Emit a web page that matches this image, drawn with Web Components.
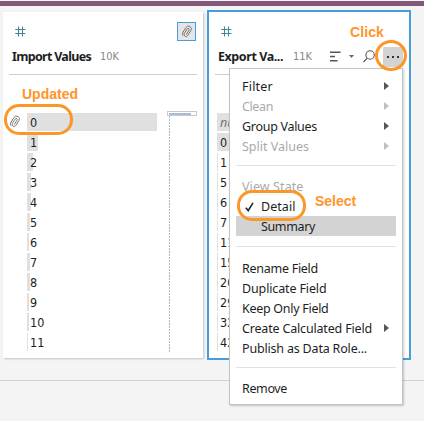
<!DOCTYPE html>
<html lang="en"><head><meta charset="utf-8"><title>Field profile</title>
<style>
html,body{margin:0;background:#f4f4f4}
body{width:424px;height:421px;overflow:hidden;font:12.5px/20px "Noto Sans","Open Sans",sans-serif;color:#1e1e1e}
</style></head><body><profile-app></profile-app>
<script>
const define=(name,html,setup)=>customElements.define(name,class extends HTMLElement{
 connectedCallback(){
  if(this.shadowRoot)return;
  this.attachShadow({mode:'open'}).innerHTML=html;
  if(setup)setup.call(this,this.shadowRoot);
 }
});
/* Text tracked to an advance width given in pixels */
define('fit-text','<style>:host{display:inline-block;white-space:nowrap;flex:none}</style><span><slot></slot></span>',function(r){
 const s=r.querySelector('span'),w=+this.getAttribute('w'),n=this.textContent.length;
 const d=(w-s.getBoundingClientRect().width)/n;
 s.style.letterSpacing=d.toFixed(3)+'px';
});
define('hash-icon','<style>:host{display:block;width:11px;height:11px}svg{display:block}</style><svg width="11" height="11" fill="none" stroke="#3f8799" stroke-width="1.1"><path d="M3.5 .5v10M7.5 .5v10M.2 3.5h10.2M.2 7.5h10.2"/></svg>');
define('clip-icon','<style>:host{display:block;width:12px;height:13px}svg{display:block}</style><svg width="12" height="13" viewBox="0 0 12 13" fill="none" stroke="#707070" stroke-width=".85" stroke-linecap="round"><g transform="rotate(32 6 6.5)"><path d="M3 8.8V3.6a2.9 2.9 0 0 1 5.8 0v6a2 2 0 0 1-4 0V4.2a1.1 1.1 0 0 1 2.2 0v5"/><path d="M3 8.2v1.3a3 3 0 0 0 1.2 2.4"/></g></svg>');
define('value-row',`<style>:host{display:grid;height:20px;grid-template-columns:24px 1fr;align-items:start;font-family:"DejaVu Sans Condensed","DejaVu Sans",sans-serif;font-stretch:condensed;font-size:12.5px}
.i{padding:2px 0 0 6px}.b{display:flex;box-sizing:border-box;height:18px;align-items:center;background:linear-gradient(#e0e0e0,#e0e0e0) no-repeat 0 0/var(--bar) 100%;padding:2px 0 0 3px}</style><div class="i"><slot name="icon"></slot></div><div class="b"><slot></slot></div>`);
define('menu-item',`<style>:host{display:flex;height:20px;align-items:center;justify-content:space-between;padding:0 7px 0 6px}
:host([disabled]){color:#aaa}:host([active]){background:#d3d3d3}
:host([indent]){padding-left:25px}:host([checked]){padding-left:9px}
.l{display:flex;align-items:center;gap:7px;padding-top:2px}svg{display:none}:host([sub]) .s,:host([checked]) .c{display:block}</style>
<span class="l"><svg class="c" width="9" height="10" fill="none" stroke="#222" stroke-width="1.6"><path d="M.8 5.8l2.4 2.8L8 .9"/></svg><slot></slot></span><svg class="s" width="5" height="8"><path d="M0 0l5 4-5 4z" fill="currentColor" opacity=".75"/></svg>`);
define('menu-rule','<style>:host{display:block;height:1px;background:#e1e1e1}</style>');
define('field-menu',`<style>:host{position:absolute;left:229px;top:68px;width:174px;height:337px;box-sizing:border-box;background:#fff;border:1px solid #c3c3c3;box-shadow:1px 1px 2px #0003;padding:7px 6px;z-index:2}
menu-rule.a{margin:9px 0 10px}menu-rule.b{margin:10px 0 11px}menu-rule.c{margin:9px 0 10px}</style>
<menu-item sub><fit-text w="31">Filter</fit-text></menu-item>
<menu-item sub disabled><fit-text w="31">Clean</fit-text></menu-item>
<menu-item sub><fit-text w="75">Group Values</fit-text></menu-item>
<menu-item sub disabled><fit-text w="67">Split Values</fit-text></menu-item>
<menu-rule class="a"></menu-rule>
<menu-item disabled><fit-text w="61.5">View State</fit-text></menu-item>
<menu-item checked><fit-text w="34.5">Detail</fit-text></menu-item>
<menu-item active indent><fit-text w="54">Summary</fit-text></menu-item>
<menu-rule class="b"></menu-rule>
<menu-item><fit-text w="76">Rename Field</fit-text></menu-item>
<menu-item><fit-text w="84.5">Duplicate Field</fit-text></menu-item>
<menu-item><fit-text w="86.5">Keep Only Field</fit-text></menu-item>
<menu-item sub><fit-text w="130">Create Calculated Field</fit-text></menu-item>
<menu-item><fit-text w="125">Publish as Data Role...</fit-text></menu-item>
<menu-rule class="c"></menu-rule>
<menu-item><fit-text w="45">Remove</fit-text></menu-item>`);
define('field-card',`<style>:host{display:block;box-sizing:border-box;width:200px;height:346px;background:#fff;box-shadow:1px 1px 2px #0003}
:host([selected]){width:204px;height:350px;border:2px solid #449fdb;box-shadow:none}
.top{display:flex;justify-content:space-between;height:31px;padding:10px 10px 0 12px;box-sizing:border-box}
hash-icon{margin-top:4px}
.head{display:flex;height:32px;align-items:center;padding:0 0 4px 3px;box-sizing:border-box;margin:0 6px 38px;border-bottom:1px solid #cfcfcf}
.body{display:grid;grid-template-columns:154px 1fr}
:host([selected]) .body{margin-left:-16px}
</style><div class="top"><hash-icon></hash-icon><slot name="badge"></slot></div><div class="head"><slot name="head"></slot></div><div class="body"><div><slot></slot></div><slot name="map"></slot></div>`);
define('mini-map',`<style>:host{display:block;margin:-2px 0 0 10px;width:30px}.v{box-sizing:border-box;height:5px;border:1px solid #c9c9c9;padding:1px 0 0 1px}.v div{height:2px;width:22px;background:#a9bdd4}.d{height:236px;width:1px;margin-left:2px;background:repeating-linear-gradient(#a9bac9 0 2px,transparent 2px 3px)}</style><div class="v"><div></div></div><div class="d"></div>`);
define('orange-note',`<style>:host{position:absolute;z-index:5;font:bold 14px/16px "Liberation Sans",Arial,sans-serif;color:#ff9429}</style><slot></slot>`);
define('orange-ring',`<style>:host{position:absolute;z-index:4;box-sizing:border-box;border:3px solid #fb9728;border-radius:15px}</style>`);
define('profile-app',`<style>
:host{display:block;position:relative;width:424px;height:421px;overflow:hidden;background:#f4f4f4}
.bar{height:5px;margin-top:1px;background:#84577b}
.cards{display:flex;align-items:flex-start;gap:4px;padding:4px 0 0 3px;height:370px;border-bottom:1px solid #d0d0d0}
.first{margin-top:2px}
.badge{width:19px;height:19px;box-sizing:border-box;border:1px solid #449fdb;background:#e5e5e5;display:grid;place-items:center;margin-right:-3px}
.head{display:flex;align-items:center}
.t{font-weight:700;font-size:12.5px}.n{color:#888;font:11px/20px "DejaVu Sans Condensed","DejaVu Sans",sans-serif;font-stretch:condensed}
.more{width:20px;height:20px;background:#d3d3d3;display:flex;align-items:center;justify-content:center;gap:3px}
.more i{width:2px;height:2px;background:#333}
svg{display:block}
.null{font-family:"Noto Sans",sans-serif;font-style:italic;color:#777}
</style>
<div class="bar"></div>
<div class="cards">
<field-card class="first"><div class="badge" slot="badge"><clip-icon></clip-icon></div>
<div class="head" slot="head"><fit-text class="t" w="79">Import Values</fit-text><fit-text class="n" style="margin-left:9px" w="19">10K</fit-text></div>
<mini-map slot="map"></mini-map></field-card>
<field-card class="second" selected><div class="head" slot="head"><fit-text class="t" w="65">Export Va...</fit-text><fit-text class="n" style="margin-left:10px" w="19">11K</fit-text>
<svg style="margin-left:18px" width="11" height="11" stroke="#555" stroke-width="1.6"><path d="M0 1.2h10.5M0 5.5h5M0 9.8h7.5"/></svg>
<svg style="margin-left:8px" width="5" height="3"><path d="M0 0h5L2.5 3z" fill="#666"/></svg>
<svg style="margin-left:9px" width="12" height="13" fill="none" stroke="#555" stroke-width="1.1"><circle cx="7.1" cy="5" r="4.2"/><path d="M4.2 8.2L.5 12"/></svg>
<div class="more" style="margin-left:8px;margin-right:-20px"><i></i><i></i><i></i></div></div></field-card>
</div>
<field-menu></field-menu>
<orange-note style="left:350px;top:24px"><fit-text w="34">Click</fit-text></orange-note>
<orange-note style="left:22px;top:86px"><fit-text w="56">Updated</fit-text></orange-note>
<orange-note style="left:315px;top:193px"><fit-text w="41">Select</fit-text></orange-note>
<orange-ring style="left:375px;top:40px;width:32px;height:31px;border-radius:50%"></orange-ring>
<orange-ring style="left:4px;top:104px;width:69px;height:31px"></orange-ring>
<orange-ring style="left:237px;top:190px;width:69px;height:31px"></orange-ring>`,function(r){
 const fill=(sel,vals,bars)=>vals.forEach((v,i)=>{
  const e=document.createElement('value-row');
  e.style.setProperty('--bar',bars[i]+'px');
  if(v==='null')e.className='null';
  e.innerHTML=(sel==='.first'&&i===0?'<clip-icon slot="icon"></clip-icon>':'')+v;
  r.querySelector(sel).append(e);
 });
 fill('.first',[0,1,2,3,4,5,6,7,8,9,10,11],[130,11,6,4,4,3,2,3,3,2,2,1]);
 fill('.second',['null',0,1,5,6,7,11,15,20,29,32,42],[130,130,1,1,1,1,1,1,1,1,1,1]);
});
</script></body></html>
